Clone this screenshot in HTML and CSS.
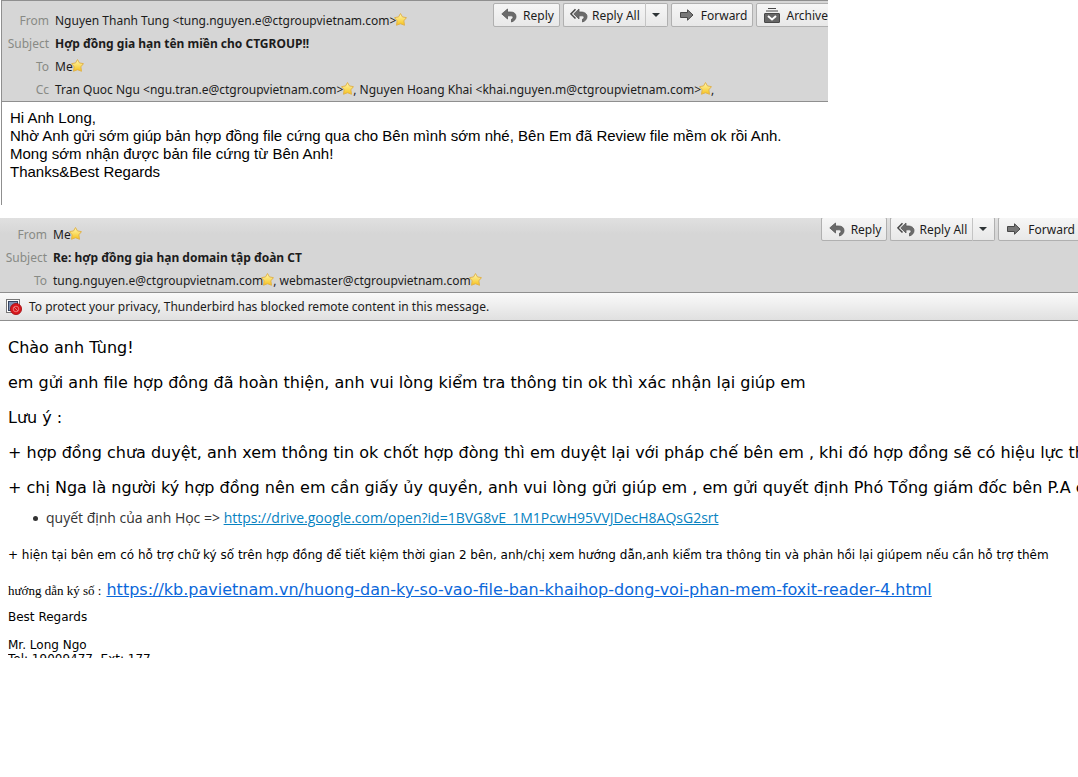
FILE: index.html
```html
<!DOCTYPE html>
<html lang="vi">
<head>
    <meta charset="UTF-8">
    <meta name="viewport" content="width=device-width, initial-scale=1.0">
    <title>Hợp đồng gia hạn tên miền</title>
    <link rel="stylesheet" href="styles.css">
</head>
<body>
    <!-- shared icons -->
    <svg class="sprite" aria-hidden="true">
        <defs>
            <linearGradient id="gold" x1="0" y1="0" x2="0" y2="1">
                <stop offset="0" stop-color="#fff9b0"/>
                <stop offset="1" stop-color="#f6c21c"/>
            </linearGradient>
            <symbol id="star" viewBox="0 0 12 12">
                <path d="M6 .5 7.800 3.600l3.700.7-2.400 2.900.6 4.100L6 9.900l-3.700 1.400.6-4.100L.5 4.300l3.700-.7z" fill="url(#gold)" stroke="#e0b24c" stroke-width=".9" stroke-linejoin="round"/>
            </symbol>
            <symbol id="reply" viewBox="0 0 16 16">
                <path d="M6.500 2v3h3c3.500 0 5.500 1.700 5.500 4.500 0 2.500-1.500 4.500-4.500 5.500v-2.800c1-.3 1.500-1 1.500-1.900 0-1-.8-1.500-2.500-1.500h-3v3.200L.8 6.900z" fill="#6b6b6b" stroke="#585858" stroke-width=".8"/>
            </symbol>
            <symbol id="reply-all" viewBox="0 0 18 16">
                <path d="M5.500 2.200.9 6.900l4.600 4.700" fill="none" stroke="#484848" stroke-width="1.500"/>
                <path d="M9 2v3h2c3.500 0 6 1.700 6 4.500 0 2.500-1.500 4.500-4.500 5.500v-2.800c1-.3 1.500-1 1.500-1.900 0-1-.8-1.500-2.500-1.500H9v3.200L3.800 6.900z" fill="#6b6b6b" stroke="#585858" stroke-width=".8"/>
            </symbol>
            <symbol id="forward" viewBox="0 0 16 16">
                <path d="M1.500 5.500h7V2.800L14 8l-5.500 5.200v-2.700h-7z" fill="#777" stroke="#484848"/>
            </symbol>
            <symbol id="archive" viewBox="0 0 16 16">
                <path d="M4 1.500h8M2 4h12" stroke="#484848" stroke-width="1"/>
                <rect x=".5" y="6.500" width="15" height="9" rx=".5" fill="#666" stroke="#484848"/>
                <path d="m4 9 4 3.500L12 9" fill="none" stroke="#fff" stroke-width="2"/>
            </symbol>
            <symbol id="blocked" viewBox="0 0 16 16">
                <rect x=".5" y=".5" width="13" height="13" fill="#fff" stroke="#777"/>
                <rect x="2.500" y="2.500" width="9" height="9" fill="#7f93b5" stroke="#34435f"/>
                <circle cx="10" cy="10" r="5.600" fill="#d8161b" stroke="#a00d12" stroke-width=".8"/>
                <circle cx="10" cy="10" r="2.800" fill="none" stroke="#f08a8a" stroke-width=".8"/>
                <path d="m8 8 4 4" stroke="#f08a8a" stroke-width=".8"/>
            </symbol>
        </defs>
    </svg>

    <article class="mail mail-short">
        <header class="mail-header">
            <dl class="fields">
                <dt>From</dt>
                <dd>Nguyen Thanh Tung &lt;tung.nguyen.e@ctgroupvietnam.com&gt;<svg class="star"><use href="#star"/></svg></dd>
                <dt>Subject</dt>
                <dd class="subject">Hợp đồng gia hạn tên miền cho CTGROUP!!</dd>
                <dt>To</dt>
                <dd>Me<svg class="star"><use href="#star"/></svg></dd>
                <dt>Cc</dt>
                <dd>Tran Quoc Ngu &lt;ngu.tran.e@ctgroupvietnam.com&gt;<svg class="star"><use href="#star"/></svg>, Nguyen Hoang Khai &lt;khai.nguyen.m@ctgroupvietnam.com&gt;<svg class="star"><use href="#star"/></svg>,</dd>
            </dl>
            <div class="toolbar">
                <button type="button" class="btn"><svg class="icon"><use href="#reply"/></svg>Reply</button>
                <div class="split">
                    <button type="button" class="btn"><svg class="icon icon-wide"><use href="#reply-all"/></svg>Reply All</button>
                    <button type="button" class="btn btn-drop" aria-label="More reply options"><span class="caret"></span></button>
                </div>
                <button type="button" class="btn btn-forward"><svg class="icon"><use href="#forward"/></svg>Forward</button>
                <button type="button" class="btn"><svg class="icon"><use href="#archive"/></svg>Archive</button>
            </div>
        </header>
        <div class="mail-body plain">
            Hi Anh Long,<br>
            Nhờ Anh gửi sớm giúp bản hợp đồng file cứng qua cho Bên mình sớm nhé, Bên Em đã Review file mềm ok rồi Anh.<br>
            Mong sớm nhận được bản file cứng từ Bên Anh!<br>
            Thanks&amp;Best Regards
        </div>
    </article>

    <article class="mail mail-reply">
        <header class="mail-header">
            <dl class="fields">
                <dt>From</dt>
                <dd>Me<svg class="star"><use href="#star"/></svg></dd>
                <dt>Subject</dt>
                <dd class="subject">Re: hợp đồng gia hạn domain tập đoàn CT</dd>
                <dt>To</dt>
                <dd>tung.nguyen.e@ctgroupvietnam.com<svg class="star"><use href="#star"/></svg>, webmaster@ctgroupvietnam.com<svg class="star"><use href="#star"/></svg></dd>
            </dl>
            <div class="toolbar">
                <button type="button" class="btn"><svg class="icon"><use href="#reply"/></svg>Reply</button>
                <div class="split">
                    <button type="button" class="btn"><svg class="icon icon-wide"><use href="#reply-all"/></svg>Reply All</button>
                    <button type="button" class="btn btn-drop" aria-label="More reply options"><span class="caret"></span></button>
                </div>
                <button type="button" class="btn btn-forward"><svg class="icon"><use href="#forward"/></svg>Forward</button>
            </div>
        </header>
        <div class="notice">
            <svg class="icon"><use href="#blocked"/></svg>
            <span>To protect your privacy, Thunderbird has blocked remote content in this message.</span>
        </div>
        <div class="mail-body rich">
            <p>Chào anh Tùng!</p>
            <p>em gửi anh file hợp đông đã hoàn thiện, anh vui lòng kiểm tra thông tin ok thì xác nhận lại giúp em</p>
            <p>Lưu ý :</p>
            <p>+ hợp đồng chưa duyệt, anh xem thông tin ok chốt hợp đòng thì em duyệt lại với pháp chế bên em , khi đó hợp đồng sẽ có hiệu lực tha</p>
            <p>+ chị Nga là người ký hợp đồng nên em cần giấy ủy quyền, anh vui lòng gửi giúp em , em gửi quyết định Phó Tổng giám đốc bên P.A ch</p>
            <ul>
                <li>quyết định của anh Học =&gt; <a href="https://drive.google.com/open?id=1BVG8vE_1M1PcwH95VVJDecH8AQsG2srt">https://drive.google.com/open?id=1BVG8vE_1M1PcwH95VVJDecH8AQsG2srt</a></li>
            </ul>
            <p class="small note">+ hiện tại bên em có hỗ trợ chữ ký số trên hợp đồng để tiết kiệm thời gian 2 bên, anh/chị xem hướng dẫn,anh kiểm tra thông tin và phản hồi lại giúpem nếu cần hỗ trợ thêm</p>
            <p class="guide"><span class="serif">hướng dẫn ký số :</span> <a href="https://kb.pavietnam.vn/huong-dan-ky-so-vao-file-ban-khaihop-dong-voi-phan-mem-foxit-reader-4.html">https://kb.pavietnam.vn/huong-dan-ky-so-vao-file-ban-khaihop-dong-voi-phan-mem-foxit-reader-4.html</a></p>
            <p class="small regards">Best Regards</p>
            <p class="small signature">Mr. Long Ngo<br>Tel: 19009477&nbsp; Ext: 177</p>
        </div>
    </article>
</body>
</html>
```
FILE: styles.css
```css
body {
    margin: 0;
    background: #fff;
    color: #000;
    overflow-x: hidden;
}
.sprite {
    position: absolute;
    width: 0;
    height: 0;
}
.mail {
    overflow: hidden;
}
.mail-short {
    max-width: 826px;
    margin-left: 1px;
    border-left: 1px solid #8f8f8f;
}

/* header */
.mail-header {
    display: grid;
    background: #d6d6d6;
    border-bottom: 1px solid #8f8f8f;
    font: 12px/23px "Noto Sans", sans-serif;
    color: #1c1c1c;
}
.mail-short .mail-header {
    border-top: 1px solid #8f8f8f;
}
.mail-reply .mail-header {
    background: linear-gradient(#e0e0e0, #d6d6d6 16px);
}
.fields,
.toolbar {
    grid-area: 1 / 1;
}
.fields {
    display: grid;
    grid-template-columns: 47px 1fr;
    column-gap: 6px;
    margin: 0;
    padding: 8px 0 0;
    white-space: nowrap;
}
.mail-reply .fields {
    padding: 5px 0 0;
}
.fields dt {
    text-align: right;
    color: #888a85;
}
.fields dd {
    margin: 0;
}
.subject {
    font-weight: 700;
}
.star {
    width: 13px;
    height: 13px;
    margin: 0 -1px 0 -2px;
    vertical-align: -1px;
}

/* toolbar */
.toolbar {
    display: flex;
    gap: 3px;
    justify-self: end;
    align-self: start;
    margin: 2px -6px 0 0;
}
.mail-reply .toolbar {
    margin: -1px -3px 0 0;
}
.btn {
    display: flex;
    align-items: center;
    gap: 6px;
    height: 24px;
    padding: 0 5px 0 7px;
    border: 1px solid #b0b0b0;
    border-radius: 2px;
    background: linear-gradient(#f6f6f6, #e8e8e8);
    color: #1c1c1c;
    font: inherit;
    white-space: nowrap;
}
.split {
    display: flex;
}
.split .btn:first-child {
    gap: 4px;
    padding: 0 5px 0 6px;
    border-right: 0;
    border-radius: 2px 0 0 2px;
}
.split .btn-drop {
    padding: 0 7px 0 6px;
    border-left: 1px solid #c4c4c4;
    border-radius: 0 2px 2px 0;
}
.caret {
    border: 4px solid transparent;
    border-top-color: #2e3436;
    border-bottom: 0;
}
.icon {
    flex: none;
    width: 16px;
    height: 16px;
}
.icon-wide {
    width: 18px;
}

/* blocked content bar */
.notice {
    display: flex;
    align-items: center;
    gap: 7px;
    height: 27px;
    padding: 0 6px;
    border-bottom: 1px solid #8f8f8f;
    background: linear-gradient(#fafafa, #e0e0e0);
    font: 12px "Noto Sans", sans-serif;
    color: #1c1c1c;
}

/* bodies */
.plain {
    padding: 7px 8px 24px;
    font: 15px/18px "Liberation Sans", sans-serif;
}
.mail-reply {
    margin-top: 13px;
}
.rich {
    padding: 17px 0 0 8px;
    font: 16px/19px "DejaVu Sans", sans-serif;
    white-space: nowrap;
}
.rich p {
    margin: 0;
}
.rich p + p {
    margin-top: 16px;
}
.rich a {
    color: #0b67da;
}
.rich ul {
    margin: 12px 0 0;
    padding-left: 25px;
    list-style: none;
    font: 14px/18px "Open Sans", sans-serif;
    color: #333;
}
.rich li::before {
    content: "";
    display: inline-block;
    width: 5px;
    height: 5px;
    margin-right: 8px;
    border-radius: 50%;
    background: #333;
    vertical-align: 2px;
}
.rich ul a {
    color: #0782c1;
}
.rich .small {
    font-size: 12px;
    line-height: 14px;
}
.rich .note {
    margin-top: 21px;
}
.rich .guide {
    margin-top: 18px;
}
.serif {
    font-family: "Liberation Serif", serif;
    font-size: 13px;
}
.rich .regards {
    margin-top: 10px;
}
.rich .signature {
    height: 20px;
    margin-top: 14px;
    overflow: hidden;
}
```
